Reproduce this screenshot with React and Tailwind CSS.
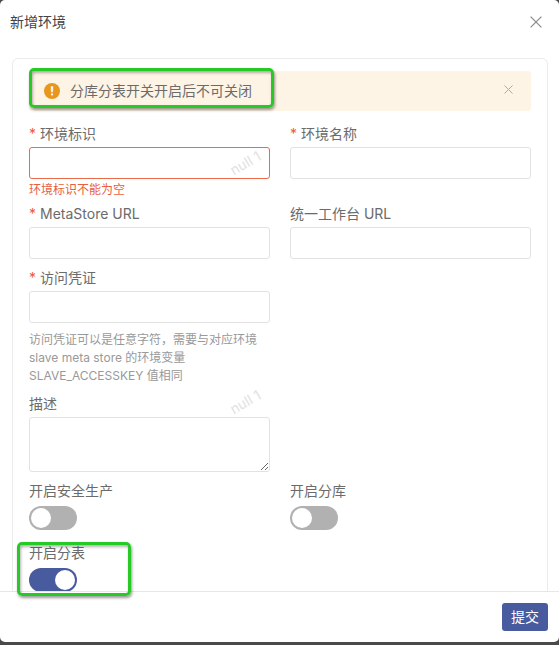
import React, { useState } from 'react';

const CloseIcon = ({ className }) => (
  <svg viewBox="0 0 12 12" className={className} fill="none" stroke="currentColor" strokeWidth="1.3" aria-hidden="true">
    <path d="M0.6 0.6 L11.4 11.4 M11.4 0.6 L0.6 11.4" />
  </svg>
);

const WarningIcon = () => (
  <svg viewBox="0 0 16 16" className="w-4 h-4 shrink-0" aria-hidden="true">
    <circle cx="8" cy="8" r="8" fill="#e8961e" />
    <path d="M7 3.6h2l-0.3 5.4h-1.4z" fill="#fff" stroke="#fff" strokeWidth="0.4" strokeLinejoin="round" />
    <circle cx="8" cy="11.4" r="1.1" fill="#fff" />
  </svg>
);

const Label = ({ htmlFor, required, children }) => (
  <label htmlFor={htmlFor} className="block mb-[3px] text-sm leading-5 text-[#6b6b6b]">
    {required && <span className="inline-block w-[11px] text-[#ee5a36]">*</span>}
    {children}
  </label>
);

const TextField = ({ id, label, required, error, help, value, onChange }) => (
  <div>
    <Label htmlFor={id} required={required}>{label}</Label>
    <input
      id={id}
      name={id}
      type="text"
      value={value}
      onChange={onChange}
      className={`block w-full h-8 px-2 text-sm rounded-[3px] border bg-white outline-none ${
        error ? 'border-[#ea6a4a]' : 'border-[#e2e2e2]'
      }`}
    />
    {error && <p className="mt-[3px] -mb-[3px] text-xs leading-4 text-[#e8603e]">{error}</p>}
    {help && <p className="mt-2 text-xs leading-[18px] text-[#999999]">{help}</p>}
  </div>
);

const SwitchField = ({ id, label, checked, onChange }) => (
  <div>
    <Label htmlFor={id}>{label}</Label>
    <div className="h-[30px] pt-0.5">
      <input
        id={id}
        name={id}
        type="checkbox"
        role="switch"
        checked={checked}
        onChange={onChange}
        className="flex items-center appearance-none w-12 h-6 px-0.5 rounded-full bg-[#b1b1b1] checked:bg-[#485b9f] checked:justify-end cursor-pointer before:block before:w-5 before:h-5 before:rounded-full before:bg-white before:content-['']"
      />
    </div>
  </div>
);

const Watermark = ({ className }) => (
  <span className={`absolute pointer-events-none select-none text-sm leading-5 whitespace-nowrap text-[#e2e2e2] -rotate-30 ${className}`}>
    null 1
  </span>
);

const App = () => {
  const [showAlert, setShowAlert] = useState(true);
  const [form, setForm] = useState({
    envKey: '',
    envName: '',
    metaStore: '',
    workbench: '',
    accessKey: '',
    description: '',
    safeMode: false,
    splitDb: false,
    splitTable: true
  });

  const handleChange = (e) => {
    const { name, type, value, checked } = e.target;
    setForm(prev => ({ ...prev, [name]: type === 'checkbox' ? checked : value }));
  };

  return (
    <div className="h-screen flex flex-col pb-[3px] bg-[#4a4a4a] font-['Inter','Noto_Sans_CJK_SC',sans-serif]">
      <div role="dialog" aria-labelledby="dialog-title" className="flex-1 min-h-0 flex flex-col bg-white rounded-[5px]">
        <header className="h-11 shrink-0 flex items-center justify-between pl-[10px] pr-[17px]">
          <h1 id="dialog-title" className="text-sm text-[#444444]">新增环境</h1>
          <button type="button" aria-label="关闭" className="text-[#8c8c8c]">
            <CloseIcon className="w-3 h-3" />
          </button>
        </header>

        <main className="flex-1 min-h-0 overflow-y-auto [scrollbar-width:none] pt-[14px] pl-3 pr-[11px]">
          <form id="env-form" onSubmit={(e) => e.preventDefault()} className="border border-[#ebebeb] rounded-md pt-3 px-4 pb-4">
            {showAlert && (
              <div role="alert" className="relative h-10 flex items-center pl-[15px] pr-[18px] rounded-[3px] bg-[#fef4e6] text-sm text-[#6b6b6b]">
                <WarningIcon />
                <span className="ml-[10px] flex-1">分库分表开关开启后不可关闭</span>
                <button type="button" aria-label="关闭提示" onClick={() => setShowAlert(false)} className="-mt-1 text-[#b0a89c]">
                  <CloseIcon className="w-[9px] h-[9px]" />
                </button>
                <div className="absolute left-0 -top-[3px] w-[245px] h-10 border-3 border-[#27c927] rounded-[5px] shadow-[1px_2px_3px_rgba(0,0,0,0.4),inset_1px_2px_3px_rgba(0,0,0,0.3)] pointer-events-none" />
              </div>
            )}

            <div className="mt-[13px] grid grid-cols-2 gap-x-5 gap-y-[9px]">
              <div className="relative">
                <TextField id="envKey" label="环境标识" required error="环境标识不能为空" value={form.envKey} onChange={handleChange} />
                <Watermark className="right-2 top-[29px]" />
              </div>
              <TextField id="envName" label="环境名称" required value={form.envName} onChange={handleChange} />
              <TextField id="metaStore" label="MetaStore URL" required value={form.metaStore} onChange={handleChange} />
              <TextField id="workbench" label="统一工作台 URL" value={form.workbench} onChange={handleChange} />
              <div className="col-start-1">
                <TextField
                  id="accessKey"
                  label="访问凭证"
                  required
                  help="访问凭证可以是任意字符，需要与对应环境 slave meta store 的环境变量 SLAVE_ACCESSKEY 值相同"
                  value={form.accessKey}
                  onChange={handleChange}
                />
              </div>
              <div className="col-start-1 relative">
                <Label htmlFor="description">描述</Label>
                <textarea
                  id="description"
                  name="description"
                  value={form.description}
                  onChange={handleChange}
                  className="block w-full h-[55px] p-2 text-sm rounded-[3px] border border-[#e2e2e2] bg-white outline-none resize-y"
                />
                <Watermark className="right-2 -top-0.5" />
              </div>
              <div className="col-start-1">
                <SwitchField id="safeMode" label="开启安全生产" checked={form.safeMode} onChange={handleChange} />
              </div>
              <SwitchField id="splitDb" label="开启分库" checked={form.splitDb} onChange={handleChange} />
              <SwitchField id="splitTable" label="开启分表" checked={form.splitTable} onChange={handleChange} />
            </div>
          </form>
        </main>

        <footer className="relative shrink-0 flex justify-end pl-3 pr-[11px] pt-[11px] pb-[11px] border-t border-[#e6e6e6]">
          <div className="absolute left-[17px] -top-[50px] w-[114px] h-[54px] border-3 border-[#27c927] rounded-[5px] shadow-[1px_2px_3px_rgba(0,0,0,0.4),inset_1px_2px_3px_rgba(0,0,0,0.3)] pointer-events-none" />
          <button type="submit" form="env-form" className="h-7 px-[9px] rounded-[3px] bg-[#485b9f] text-sm text-white">
            提交
          </button>
        </footer>
      </div>
    </div>
  );
};

export default App;
